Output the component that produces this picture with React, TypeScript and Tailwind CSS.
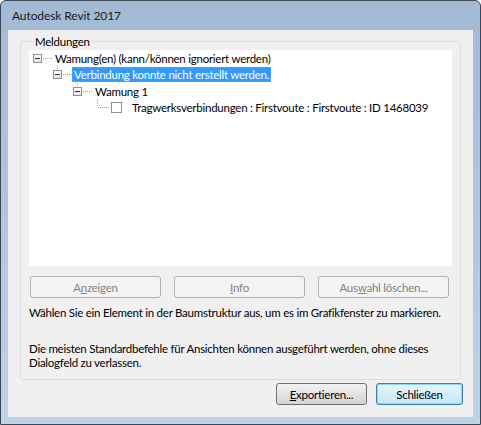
import type { ReactNode } from "react";

const font = "font-['Lato','Noto_Sans',sans-serif]";

const Expander = ({ line }: { line: boolean }) => (
  <svg width="20" height="17" className="shrink-0">
    <defs>
      <linearGradient id="exp" x1="0" y1="0" x2="0" y2="1">
        <stop offset="0" stopColor="#ffffff" />
        <stop offset="1" stopColor="#e3e3e3" />
      </linearGradient>
    </defs>
    {line && (
      <line x1="4.5" y1="0" x2="4.5" y2="4" stroke="#a0a0a0" strokeDasharray="1 1" />
    )}
    <rect x="0.5" y="4.5" width="8" height="8" fill="url(#exp)" stroke="#919191" />
    <line x1="2" y1="8.5" x2="7" y2="8.5" stroke="#1e395b" />
    <line x1="10" y1="8.5" x2="20" y2="8.5" stroke="#a0a0a0" strokeDasharray="1 1" />
  </svg>
);

const Leaf = () => (
  <svg width="18" height="17" className="shrink-0">
    <line x1="4.5" y1="0" x2="4.5" y2="8" stroke="#a0a0a0" strokeDasharray="1 1" />
    <line x1="5" y1="8.5" x2="16" y2="8.5" stroke="#a0a0a0" strokeDasharray="1 1" />
  </svg>
);

const DisabledButton = ({ children }: { children: ReactNode }) => (
  <div className="flex h-[22px] w-[131px] items-center justify-center rounded-[3px] border border-[#adb2b5] bg-[#f4f4f4] text-[#838383]">
    {children}
  </div>
);

export default function App() {
  return (
    <div className={`h-[425px] w-[481px] text-[11.5px] leading-[15px] tracking-[-0.25px] text-black ${font}`}>
      <div className="flex h-full flex-col rounded-t-[6px] border border-[#3b4754] bg-gradient-to-b from-[#a2bad4] to-[#bcd3ea]">
        {/* title */}
        <div className="flex h-[29px] shrink-0 items-center pl-[11px] text-[12px] tracking-[-0.1px] text-[#1b1b1b]">
          Autodesk Revit 2017
        </div>

        {/* client area */}
        <div className="mx-[7px] mb-[7px] flex flex-1 flex-col bg-[#f0f0f0]">
          <fieldset className="mx-[12px] mt-[4px] rounded-[3px] border border-[#d5dfe5] px-[8px] pb-[9px]">
            <legend className="ml-[4px] px-[2px]">Meldungen</legend>

            <div className="mt-[1px] h-[216px] bg-white pl-[4px] pt-0">
              <div className="flex h-[16.5px] items-center">
                <Expander line={false} />
                <span className="whitespace-nowrap px-[2px]">Wamung(en) (kann/können ignoriert werden)</span>
              </div>
              <div className="flex h-[16.5px] items-center pl-[20px]">
                <Expander line />
                <span className="-ml-[1px] whitespace-nowrap border border-dotted border-[#d9893f] bg-[#3399ff] px-[1px] leading-[13px] text-white">
                  Verbindung konnte nicht erstellt werden.
                </span>
              </div>
              <div className="flex h-[16.5px] items-center pl-[40px]">
                <Expander line />
                <span className="whitespace-nowrap px-[2px]">Wamung 1</span>
              </div>
              <div className="flex h-[16.5px] items-center pl-[60px]">
                <Leaf />
                <span className="h-[11px] w-[11px] shrink-0 border border-[#8f8f8f] bg-white" />
                <span className="whitespace-nowrap pl-[10px]">
                  Tragwerksverbindungen : Firstvoute : Firstvoute : ID 1468039
                </span>
              </div>
            </div>

            <div className="mt-[10px] flex gap-[13px] pl-[1px]">
              <DisabledButton>
                <span>
                  A<u>n</u>zeigen
                </span>
              </DisabledButton>
              <DisabledButton>
                <span>
                  <u>I</u>nfo
                </span>
              </DisabledButton>
              <DisabledButton>
                <span>
                  Aus<u>w</u>ahl löschen...
                </span>
              </DisabledButton>
            </div>

            <p className="mt-[7px] whitespace-nowrap">
              Wählen Sie ein Element in der Baumstruktur aus, um es im Grafikfenster zu markieren.
            </p>
            <p className="mt-[22px] whitespace-nowrap leading-[14px]">
              Die meisten Standardbefehle für Ansichten können ausgeführt werden, ohne dieses
              <br />
              Dialogfeld zu verlassen.
            </p>
          </fieldset>

          <div className="mt-[3px] flex justify-end gap-[9px] pr-[10px]">
            <button className="h-[22px] w-[91px] rounded-[3px] border border-[#707070] bg-gradient-to-b from-[#f2f2f2] to-[#d4d4d4] text-black">
              <u>E</u>xportieren...
            </button>
            <button className="h-[22px] w-[87px] rounded-[3px] border border-[#3c7fb1] bg-gradient-to-b from-[#e8f5fc] to-[#c6e6f7] text-black shadow-[inset_0_0_0_1px_#8fd8f7]">
              Schließen
            </button>
          </div>
        </div>
      </div>
    </div>
  );
}
